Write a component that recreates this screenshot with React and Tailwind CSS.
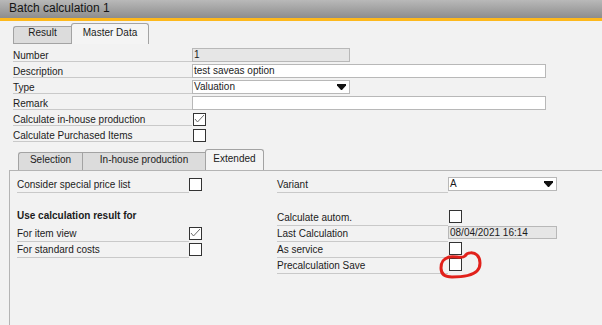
import React from "react";

function Arrow() {
  return (
    <svg width="9" height="6" viewBox="0 0 9 6" className="block">
      <polygon points="0,0 9,0 9,1.5 5,6 4,6 0,1.5" fill="#111" />
    </svg>
  );
}

function Check({ checked }) {
  return (
    <div className="w-[13px] h-[13px] border border-[#333] bg-white">
      {checked && (
        <svg width="11" height="11" viewBox="0 0 11 11" className="block">
          <path d="M1 5 L3.5 8 L10 1" fill="none" stroke="#6b6b6b" strokeWidth="1" />
        </svg>
      )}
    </div>
  );
}

function TopRow({ label, children }) {
  return (
    <div className="flex h-[16px]">
      <div className="ml-[13px] w-[179px] border-b border-[#c9c9c9] pt-[5px] leading-[10px] whitespace-nowrap">
        {label}
      </div>
      <div>{children}</div>
    </div>
  );
}

function Field({ w, gray, children, arrow }) {
  return (
    <div
      className={
        "mt-[2px] h-[14px] border border-[#b8b8b8] flex items-center pl-[1px] leading-[12px] " +
        (gray ? "bg-[#e6e6e6]" : "bg-white")
      }
      style={{ width: w }}
    >
      <span className="flex-1 whitespace-nowrap">{children}</span>
      {arrow && (
        <span className="mr-[3px]">
          <Arrow />
        </span>
      )}
    </div>
  );
}

function PLabel({ children, right, line = true }) {
  return (
    <div
      className={
        "pt-[3px] leading-[10px] whitespace-nowrap " +
        (right ? "w-[171px] " : "w-[172px] ") +
        (line ? "border-b border-[#c9c9c9]" : "")
      }
    >
      {children}
    </div>
  );
}

export default function App() {
  return (
    <div className="relative w-[602px] h-[325px] overflow-hidden bg-[#f2f2f2] text-[10px] text-[#1b1b1b] font-['Liberation_Sans',Arial,sans-serif]">
      {/* title bar */}
      <div className="h-[18px] bg-linear-to-b from-[#b9b9b9] to-[#8d8d8d] pl-[9px] pt-[2px] text-[12px] leading-[12px] text-[#141414]">
        Batch calculation 1
      </div>
      <div className="h-[3px] bg-[#fdb81c]" />

      {/* top tabs */}
      <div className="h-[23px] flex items-end pl-[13px]">
        <div className="w-[58px] h-[18px] border-t border-l border-b border-[#a3a3a3] rounded-tl-[3px] bg-[#dcdcdc] pt-[1px] text-center leading-[10px]">
          Result
        </div>
        <div className="w-[78px] h-[21px] border-t border-l border-r border-[#a3a3a3] rounded-t-[3px] bg-[#f4f4f4] pt-[4px] text-center leading-[10px]">
          Master Data
        </div>
      </div>

      {/* form */}
      <div className="mt-[2px]">
        <TopRow label="Number">
          <Field w={158} gray>1</Field>
        </TopRow>
        <TopRow label="Description">
          <Field w={354}>test saveas option</Field>
        </TopRow>
        <TopRow label="Type">
          <Field w={158} arrow>Valuation</Field>
        </TopRow>
        <TopRow label="Remark">
          <Field w={354}></Field>
        </TopRow>
        <TopRow label="Calculate in-house production">
          <div className="ml-[1px] mt-[3px]">
            <Check checked />
          </div>
        </TopRow>
        <TopRow label="Calculate Purchased Items">
          <div className="ml-[1px] mt-[3px]">
            <Check />
          </div>
        </TopRow>
      </div>

      {/* inner tabs */}
      <div className="h-[28px] flex items-end pl-[18px]">
        <div className="w-[64px] h-[18px] border-t border-l border-[#a3a3a3] rounded-tl-[3px] bg-[#dcdcdc] pt-[2px] text-center leading-[10px]">
          Selection
        </div>
        <div className="w-[123px] h-[18px] border-t border-l border-[#a3a3a3] bg-[#dcdcdc] pt-[2px] text-center leading-[10px]">
          In-house production
        </div>
        <div className="w-[59px] h-[21px] border-t border-l border-r border-[#a3a3a3] rounded-t-[3px] bg-[#f4f4f4] pt-[4px] text-center leading-[10px]">
          Extended
        </div>
      </div>

      {/* panel */}
      <div className="ml-[9px] h-[160px] border-t border-l border-[#b4b4b4] pl-[7px] pt-[6px]">
        {/* row A */}
        <div className="flex h-[16px]">
          <div className="flex w-[260px]">
            <PLabel>Consider special price list</PLabel>
            <div className="mt-[1px]">
              <Check />
            </div>
          </div>
          <div className="flex">
            <PLabel right>Variant</PLabel>
            <div
              className="h-[14px] w-[109px] border border-[#b8b8b8] bg-white flex items-center pl-[1px] leading-[12px]"
            >
              <span className="flex-1">A</span>
              <span className="mr-[3px]">
                <Arrow />
              </span>
            </div>
          </div>
        </div>

        <div className="h-[17px]" />

        {/* row B */}
        <div className="flex h-[16px]">
          <div className="flex w-[260px]">
            <div className="pt-[1px] leading-[10px] font-bold whitespace-nowrap">
              Use calculation result for
            </div>
          </div>
          <div className="flex">
            <PLabel right>Calculate autom.</PLabel>
            <div className="ml-[1px]">
              <Check />
            </div>
          </div>
        </div>

        {/* row C */}
        <div className="flex h-[16px]">
          <div className="flex w-[260px]">
            <PLabel>For item view</PLabel>
            <div className="mt-[1px]">
              <Check checked />
            </div>
          </div>
          <div className="flex">
            <PLabel right>Last Calculation</PLabel>
            <div className="h-[13px] w-[109px] border border-[#b8b8b8] bg-[#e6e6e6] flex items-center pl-[1px] leading-[12px] whitespace-nowrap">
              08/04/2021 16:14
            </div>
          </div>
        </div>

        {/* row D */}
        <div className="flex h-[16px]">
          <div className="flex w-[260px]">
            <PLabel>For standard costs</PLabel>
            <div className="mt-[1px]">
              <Check />
            </div>
          </div>
          <div className="flex">
            <PLabel right>As service</PLabel>
            <div className="ml-[1px]">
              <Check />
            </div>
          </div>
        </div>

        {/* row E */}
        <div className="flex h-[16px]">
          <div className="w-[260px]" />
          <div className="flex">
            <PLabel right>Precalculation Save</PLabel>
            <div className="ml-[1px]">
              <Check />
            </div>
          </div>
        </div>
      </div>

      {/* red annotation */}
      <svg
        className="absolute inset-0 pointer-events-none"
        width="602"
        height="325"
        viewBox="0 0 602 325"
      >
        <path
          d="M450,257 C456,256 462,259 465,256 C467,252 474,252 477,255 C481,259 481,267 477,271 C472,276 462,277 452,277 C445,277 441,274 441,268 C441,262 443,259 449,257"
          fill="none"
          stroke="#e1211b"
          strokeWidth="3"
          strokeLinecap="round"
          strokeLinejoin="round"
        />
      </svg>
    </div>
  );
}
